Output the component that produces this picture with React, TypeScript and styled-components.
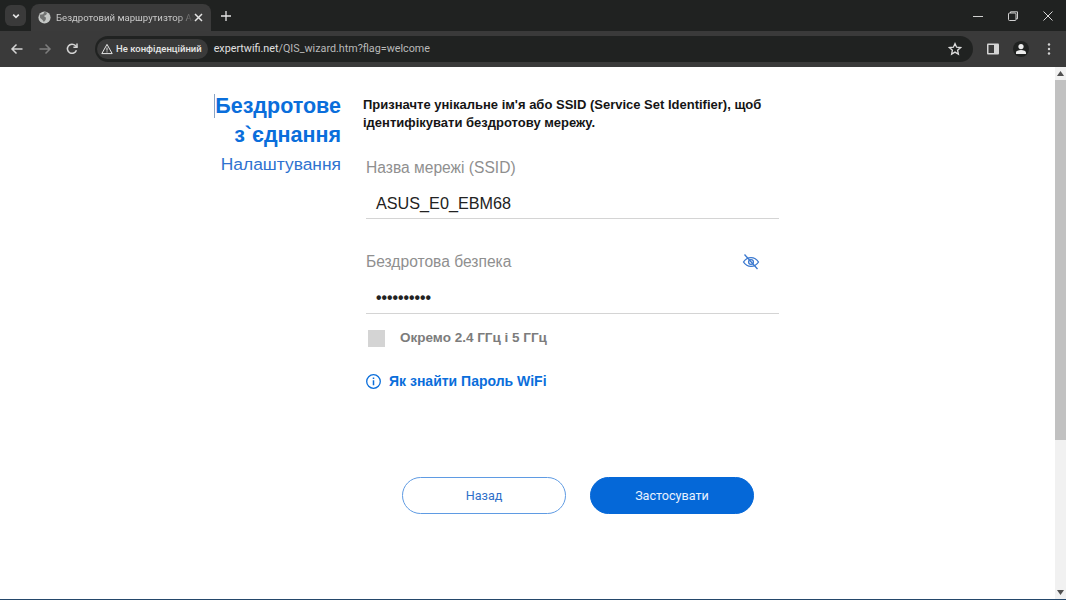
import React from "react";
import styled, { createGlobalStyle } from "styled-components";

const Global = createGlobalStyle`
  html, body { margin: 0; padding: 0; height: 100%; overflow: hidden; background: #fff; }
  body { font-family: "Liberation Sans", Arial, sans-serif; }
  #root { height: 100%; }
`;

const Shell = styled.div`
  display: flex;
  flex-direction: column;
  width: 1066px;
  height: 600px;
`;

const TabStrip = styled.div`
  display: flex;
  align-items: flex-end;
  height: 31px;
  background: #202221;
  box-sizing: border-box;
  padding-left: 5px;
  color: #d8d8d8;
`;

const TabSearch = styled.div`
  display: flex;
  align-items: center;
  justify-content: center;
  width: 21px;
  height: 21px;
  margin-bottom: 5px;
  background: #3a3a3a;
  border-radius: 6px;
`;

const Tab = styled.div`
  display: flex;
  align-items: center;
  width: 180px;
  height: 27px;
  margin-left: 5px;
  padding: 0 8px 0 7px;
  box-sizing: border-box;
  background: #3b3b3b;
  border-radius: 8px 8px 0 0;
`;

const TabTitle = styled.span`
  flex: 1;
  margin-left: 5px;
  font: 9.6px/14px "Roboto", "Liberation Sans", sans-serif;
  color: #c9c9c9;
  white-space: nowrap;
  overflow: hidden;
  -webkit-mask-image: linear-gradient(90deg, #000 88%, transparent 100%);
  mask-image: linear-gradient(90deg, #000 88%, transparent 100%);
`;

const NewTab = styled.div`
  display: flex;
  align-items: center;
  justify-content: center;
  width: 16px;
  height: 16px;
  margin: 0 0 7px 7px;
`;

const WindowControls = styled.div`
  display: flex;
  align-items: center;
  margin-left: auto;
  align-self: flex-start;
  height: 31px;
  padding-right: 13px;
  gap: 25px;
`;

const Toolbar = styled.div`
  display: flex;
  align-items: center;
  height: 36px;
  box-sizing: border-box;
  padding: 0 3px 0 10px;
  background: #3a3a3a;
`;

const NavGroup = styled.div`
  display: flex;
  align-items: center;
  gap: 13.5px;
  margin-right: 16px;
`;

const Omnibox = styled.div`
  display: flex;
  align-items: center;
  width: 878px;
  height: 26px;
  margin-right: 6px;
  box-sizing: border-box;
  padding: 0 11px 0 2px;
  background: #202221;
  border-radius: 13px;
`;

const Chip = styled.div`
  display: flex;
  align-items: center;
  gap: 3px;
  height: 20px;
  padding: 0 6px 0 4px;
  background: #3a3a3a;
  border-radius: 10px;
  font: 500 9.5px/12px "Roboto", "Liberation Sans", sans-serif;
  color: #e6e6e6;
  white-space: nowrap;
`;

const Url = styled.span`
  flex: 1;
  margin-left: 6px;
  font: 10.75px/14px "Roboto", "Liberation Sans", sans-serif;
  color: #b9b9b9;
  b { font-weight: 400; color: #e0e0e0; }
`;

const ToolActions = styled.div`
  display: grid;
  grid-template-columns: repeat(3, 28px);
  justify-items: center;
  align-items: center;
`;

const Avatar = styled.div`
  display: flex;
  align-items: center;
  justify-content: center;
  width: 16px;
  height: 16px;
  border-radius: 50%;
  background: #202221;
`;

const Viewport = styled.div`
  flex: 1;
  display: flex;
  min-height: 0;
  border-bottom: 1px solid #24476b;
  background: #fff;
`;

const Page = styled.main`
  flex: 1;
  display: flex;
  align-items: flex-start;
  box-sizing: border-box;
  padding: 25px 0 0 214px;
`;

const Heading = styled.div`
  width: 127px;
  margin-right: 22px;
  text-align: right;
  color: #0a6edb;
`;

const Title = styled.h1`
  margin: 0;
  font: 700 21.5px/28.5px "Liberation Sans", Arial, sans-serif;
  white-space: nowrap;
  span { border-left: 1px solid #8aa4c4; }
`;

const Subtitle = styled.div`
  margin-top: 0.5px;
  font: 400 17.4px/29px "Liberation Sans", Arial, sans-serif;
  color: #2f72d0;
`;

const Form = styled.div`
  width: 416px;
  display: flex;
  flex-direction: column;
`;

const Intro = styled.p`
  margin: 4px 0 0;
  font: 700 13px/18px "Liberation Sans", Arial, sans-serif;
  color: #151515;
`;

const Field = styled.div<{ $top: number }>`
  position: relative;
  margin-top: ${(p) => p.$top}px;
  padding-left: 3px;
`;

const FieldLabel = styled.label`
  display: block;
  font: 400 15.6px/20px "Liberation Sans", Arial, sans-serif;
  color: #8f8f8f;
`;

const FieldInput = styled.div<{ $height: number }>`
  margin-top: 12px;
  padding-left: 10px;
  height: ${(p) => p.$height}px;
  font: 400 16.2px/26px "Liberation Sans", Arial, sans-serif;
  color: #222;
  border-bottom: 1px solid #d4d4d4;
`;

const Dots = styled.span`
  font-size: 15.7px;
  font-weight: 700;
`;

const EyeButton = styled.div`
  position: absolute;
  right: 19px;
  top: 1px;
  width: 18px;
  height: 18px;
`;

const CheckRow = styled.div`
  display: flex;
  align-items: center;
  margin: 15px 0 0 5px;
`;

const CheckBox = styled.div`
  width: 17px;
  height: 17px;
  background: #d4d4d4;
`;

const CheckLabel = styled.span`
  margin-left: 15px;
  font: 700 13.5px/18px "Liberation Sans", Arial, sans-serif;
  color: #7c7c7c;
`;

const HelpLink = styled.a`
  display: flex;
  align-items: center;
  margin: 25px 0 0 3px;
  font: 700 14px/18px "Liberation Sans", Arial, sans-serif;
  color: #0a6edb;
  svg { margin-right: 8px; }
`;

const Actions = styled.div`
  display: flex;
  gap: 24px;
  margin: 87px 0 0 39px;
`;

const Button = styled.button<{ $primary?: boolean }>`
  width: 164px;
  height: 37px;
  box-sizing: border-box;
  border-radius: 19px;
  border: 1px solid ${(p) => (p.$primary ? "#0568d8" : "#5f9be3")};
  background: ${(p) => (p.$primary ? "#0568d8" : "#fff")};
  color: ${(p) => (p.$primary ? "#e8f1ff" : "#2f6fc9")};
  font: 400 12.6px/16px "Roboto", "Liberation Sans", sans-serif;
  padding: 0;
`;

const Scrollbar = styled.div`
  display: flex;
  flex-direction: column;
  width: 11px;
  background: #f1f1f1;
`;

const ScrollArrow = styled.div`
  display: flex;
  align-items: center;
  justify-content: center;
  height: 13px;
`;

const ScrollTrack = styled.div`
  flex: 1;
`;

const ScrollThumb = styled.div`
  height: 360px;
  background: #c1c1c1;
`;

const Chevron = () => (
  <svg width="10" height="10" viewBox="0 0 10 10" fill="none" stroke="#e4e4e4" strokeWidth="1.6">
    <path d="M2.2 3.6 5 6.4l2.8-2.8" />
  </svg>
);

const Globe = () => (
  <svg width="13" height="13" viewBox="0 0 12 12">
    <circle cx="6" cy="6" r="5.6" fill="#c4c7c5" />
    <path d="M1.600 3.400 4.800 3l1.200-2.200 2.400.8-.8 1.800-2.200 1.200 2 1.600-.4 2.200-1.600 1.800L4 8 2 6.400z" fill="#3b3b3b" opacity=".6" />
  </svg>
);

const CloseX = () => (
  <svg width="9" height="9" viewBox="0 0 9 9" stroke="#e4e4e4" strokeWidth="1.5">
    <path d="M1 1l7 7M8 1 1 8" />
  </svg>
);

const Plus = () => (
  <svg width="10" height="10" viewBox="0 0 10 10" stroke="#e4e4e4" strokeWidth="1.3">
    <path d="M5 0v10M0 5h10" />
  </svg>
);

const Minimize = () => (
  <svg width="10" height="10" viewBox="0 0 10 10" stroke="#d0d0d0" strokeWidth="1">
    <path d="M0 5.5h10" />
  </svg>
);

const Restore = () => (
  <svg width="10" height="10" viewBox="0 0 10 10" fill="none" stroke="#d0d0d0" strokeWidth="1">
    <rect x=".5" y="2" width="7.5" height="7.5" rx="1" />
    <path d="M2.5 2V.8h7v7H8" />
  </svg>
);

const CloseWin = () => (
  <svg width="10" height="10" viewBox="0 0 10 10" stroke="#d8d8d8" strokeWidth="1">
    <path d="M.5.5l9 9M9.5.5l-9 9" />
  </svg>
);

const Back = ({ color }: { color: string }) => (
  <svg width="14" height="14" viewBox="0 0 14 14" fill="none" stroke={color} strokeWidth="1.5">
    <path d="M12.5 7H2M6.500 2.500 2 7l4.500 4.500" />
  </svg>
);

const Forward = ({ color }: { color: string }) => (
  <svg width="14" height="14" viewBox="0 0 14 14" fill="none" stroke={color} strokeWidth="1.5">
    <path d="M1.500 7H12M7.500 2.500 12 7l-4.500 4.500" />
  </svg>
);

const Reload = () => (
  <svg width="14" height="14" viewBox="0 0 14 14" fill="none" stroke="#d4d4d4" strokeWidth="1.5">
    <path d="M11.400 8.200A4.600 4.600 0 1 1 10.400 3.600L12 5" />
    <path d="M12 1.600V5.200H8.400" />
  </svg>
);

const Warn = () => (
  <svg width="12" height="12" viewBox="0 0 12 12" fill="none" stroke="#e6e6e6" strokeWidth="1">
    <path d="M6 1.400 11.200 10.600H.8z" />
    <path d="M6 4.600v3M6 8.400v1" />
  </svg>
);

const Star = () => (
  <svg width="14" height="14" viewBox="0 0 14 14" fill="none" stroke="#dcdcdc" strokeWidth="1.3">
    <path d="M7 1.600 8.600 5.200l3.900.4-2.900 2.600.8 3.900L7 10.100l-3.400 2 .8-3.900-2.900-2.600 3.900-.4z" />
  </svg>
);

const SidePanel = () => (
  <svg width="12" height="12" viewBox="0 0 12 12">
    <rect x="0" y=".5" width="12" height="11" rx="1" fill="#d4d4d4" />
    <rect x="1.500" y="2" width="5.500" height="8" fill="#3a3a3a" />
  </svg>
);

const Person = () => (
  <svg width="12" height="12" viewBox="0 0 12 12" fill="#ececec">
    <circle cx="6" cy="3.600" r="2.600" />
    <path d="M1 11V9.400C1 8 3.400 7 6 7s5 1 5 2.400V11z" />
  </svg>
);

const Kebab = () => (
  <svg width="4" height="14" viewBox="0 0 4 14" fill="#d4d4d4">
    <circle cx="2" cy="2.500" r="1.200" />
    <circle cx="2" cy="7" r="1.200" />
    <circle cx="2" cy="11.500" r="1.200" />
  </svg>
);

const EyeOff = () => (
  <svg width="18" height="18" viewBox="0 0 18 18" fill="none" stroke="#3a78cf" strokeWidth="1.300">
    <path d="M1.500 9C3.400 6 6 4.600 9 4.600S14.600 6 16.500 9c-1.900 3-4.500 4.400-7.500 4.400S3.400 12 1.500 9z" />
    <circle cx="9" cy="9" r="2.400" />
    <path d="M2.500 1.500 15.500 16" />
  </svg>
);

const Info = () => (
  <svg width="15" height="15" viewBox="0 0 15 15" fill="none" stroke="#0a6edb" strokeWidth="1.3">
    <circle cx="7.500" cy="7.500" r="6.800" />
    <path d="M7.500 6.300v5M7.500 3.400v1.500" strokeWidth="1.500" />
  </svg>
);

const ArrowUp = () => (
  <svg width="7" height="5" viewBox="0 0 7 5"><path d="M3.500 0 7 5H0z" fill="#505050" /></svg>
);

const ArrowDown = () => (
  <svg width="7" height="5" viewBox="0 0 7 5"><path d="M0 0h7L3.500 5z" fill="#505050" /></svg>
);

export default function App() {
  return (
    <Shell>
      <Global />
      <TabStrip>
        <TabSearch><Chevron /></TabSearch>
        <Tab>
          <Globe />
          <TabTitle>Бездротовий маршрутизтор ASUS</TabTitle>
          <CloseX />
        </Tab>
        <NewTab><Plus /></NewTab>
        <WindowControls>
          <Minimize />
          <Restore />
          <CloseWin />
        </WindowControls>
      </TabStrip>
      <Toolbar>
        <NavGroup>
          <Back color="#d4d4d4" />
          <Forward color="#7d7d7d" />
          <Reload />
        </NavGroup>
        <Omnibox>
          <Chip><Warn />Не конфіденційний</Chip>
          <Url><b>expertwifi.net</b>/QIS_wizard.htm?flag=welcome</Url>
          <Star />
        </Omnibox>
        <ToolActions>
          <SidePanel />
          <Avatar><Person /></Avatar>
          <Kebab />
        </ToolActions>
      </Toolbar>
      <Viewport>
        <Page>
          <Heading>
            <Title><span>Б</span>ездротове<br />з`єднання</Title>
            <Subtitle>Налаштування</Subtitle>
          </Heading>
          <Form>
            <Intro>Призначте унікальне ім'я або SSID (Service Set Identifier), щоб<br />ідентифікувати бездротову мережу.</Intro>
            <Field $top={26}>
              <FieldLabel>Назва мережі (SSID)</FieldLabel>
              <FieldInput $height={28}>ASUS_E0_EBM68</FieldInput>
            </Field>
            <Field $top={33}>
              <FieldLabel>Бездротова безпека</FieldLabel>
              <EyeButton><EyeOff /></EyeButton>
              <FieldInput $height={29}><Dots>••••••••••</Dots></FieldInput>
            </Field>
            <CheckRow>
              <CheckBox />
              <CheckLabel>Окремо 2.4 ГГц і 5 ГГц</CheckLabel>
            </CheckRow>
            <HelpLink><Info />Як знайти Пароль WiFi</HelpLink>
            <Actions>
              <Button>Назад</Button>
              <Button $primary>Застосувати</Button>
            </Actions>
          </Form>
        </Page>
        <Scrollbar>
          <ScrollArrow><ArrowUp /></ScrollArrow>
          <ScrollThumb />
          <ScrollTrack />
          <ScrollArrow><ArrowDown /></ScrollArrow>
        </Scrollbar>
      </Viewport>
    </Shell>
  );
}
